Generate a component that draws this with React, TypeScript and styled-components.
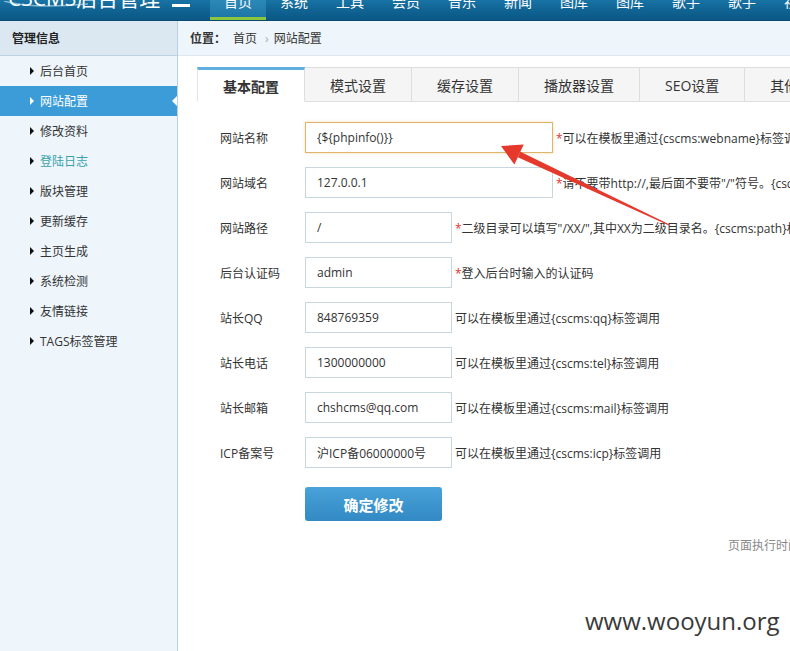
import React from "react";
import styled, { createGlobalStyle } from "styled-components";

const FONT = `"Open Sans", "Noto Sans CJK SC", sans-serif`;

const GlobalStyle = createGlobalStyle`
  html, body { margin: 0; padding: 0; background: #fff; }
  body { font-family: ${FONT}; font-size: 12px; color: #333; }
  * { box-sizing: border-box; }
`;

const Page = styled.div`
  position: relative;
  width: 790px;
  height: 651px;
  overflow: hidden;
  display: flex;
  flex-direction: column;
  background: #fff;
`;

const TopBar = styled.header`
  height: 21px;
  flex: none;
  display: flex;
  align-items: stretch;
  background: linear-gradient(to bottom, #1873a5 0%, #0f6291 55%, #0b5886 100%);
  border-bottom: 1px solid #0a4a70;
  overflow: hidden;
`;

const Logo = styled.div`
  position: relative;
  width: 172px;
  flex: none;
  padding-left: 8px;
  color: #fff;
  font-size: 21px;
  line-height: 21px;
  white-space: nowrap;
  margin-top: -12px;
`;

const Swoosh = styled.svg`
  position: absolute;
  left: 0;
  top: 13px;
`;

const Toggle = styled.div`
  width: 18px;
  height: 3px;
  margin-top: 4px;
  margin-right: 20px;
  background: #fff;
  flex: none;
`;

const Nav = styled.nav`
  display: flex;
  flex: none;
`;

const NavItem = styled.div<{ $active?: boolean }>`
  width: 56px;
  flex: none;
  display: flex;
  justify-content: center;
  align-items: flex-start;
  color: #fff;
  font-size: 14px;
  background: ${(p) => (p.$active ? "linear-gradient(to bottom, #2b89b8, #1e77a6)" : "transparent")};
  border-bottom: 3px solid ${(p) => (p.$active ? "#8cc63f" : "transparent")};
`;

const NavText = styled.span`
  line-height: 14px;
  margin-top: -5px;
  white-space: nowrap;
`;

const Body = styled.div`
  display: flex;
  flex: 1;
  min-height: 0;
`;

const Sidebar = styled.aside`
  width: 178px;
  flex: none;
  background: #eef6fc;
  border-right: 1px solid #b7d0e3;
  display: flex;
  flex-direction: column;
`;

const SideHead = styled.div`
  height: 35px;
  flex: none;
  background: #dbe8f1;
  border-bottom: 1px solid #bcd2e2;
  padding-left: 12px;
  display: flex;
  align-items: center;
  font-weight: bold;
  font-size: 12px;
  color: #222;
`;

const SideItem = styled.div<{ $active?: boolean; $visited?: boolean }>`
  position: relative;
  height: 30px;
  flex: none;
  display: flex;
  align-items: center;
  padding-left: 30px;
  font-size: 12px;
  white-space: nowrap;
  color: ${(p) => (p.$active ? "#fff" : p.$visited ? "#3aa2ab" : "#333")};
  background: ${(p) => (p.$active ? "#3b9cd7" : "transparent")};

  &::before {
    content: "";
    width: 0;
    height: 0;
    border-left: 4px solid ${(p) => (p.$active ? "#fff" : "#111")};
    border-top: 4px solid transparent;
    border-bottom: 4px solid transparent;
    margin-right: 6px;
  }

  &::after {
    content: "";
    display: ${(p) => (p.$active ? "block" : "none")};
    position: absolute;
    right: 0;
    top: 50%;
    transform: translateY(-50%);
    border-right: 5px solid #fff;
    border-top: 5px solid transparent;
    border-bottom: 5px solid transparent;
  }
`;

const Main = styled.main`
  flex: 1;
  min-width: 0;
  display: flex;
  flex-direction: column;
  overflow: hidden;
`;

const Crumb = styled.div`
  height: 35px;
  flex: none;
  background: #eef6fb;
  border-bottom: 1px solid #dde8f0;
  display: flex;
  align-items: center;
  padding-left: 12px;
  font-size: 12px;
  color: #333;
  white-space: nowrap;
`;

const CrumbLead = styled.span`
  font-weight: bold;
  margin-right: 7px;
`;

const CrumbSep = styled.span`
  color: #aaa;
  margin: 0 5px 0 8px;
`;

const Tabs = styled.div`
  display: flex;
  flex: none;
  margin: 11px 0 0 19px;
  white-space: nowrap;
`;

const Tab = styled.div<{ $active?: boolean }>`
  height: 35px;
  flex: none;
  display: flex;
  align-items: center;
  padding: 0 25px;
  font-size: 14px;
  color: #333;
  font-weight: ${(p) => (p.$active ? "bold" : "normal")};
  background: ${(p) => (p.$active ? "#fff" : "#f5f5f5")};
  border-top: ${(p) => (p.$active ? "3px solid #5fb0df" : "1px solid #dedede")};
  border-right: 1px solid #dedede;
  border-bottom: ${(p) => (p.$active ? "1px solid #fff" : "1px solid #dedede")};
  &:first-child {
    border-left: 1px solid #e3e3e3;
  }
`;

const Form = styled.div`
  padding: 20px 0 0 42px;
  display: flex;
  flex-direction: column;
`;

const Row = styled.div`
  display: flex;
  align-items: center;
  height: 31px;
  margin-bottom: 14px;
  white-space: nowrap;
`;

const Label = styled.div`
  width: 85px;
  flex: none;
  font-size: 12px;
  color: #333;
`;

const Field = styled.input<{ $wide?: boolean; $focus?: boolean }>`
  width: ${(p) => (p.$wide ? "248px" : "147px")};
  height: 31px;
  flex: none;
  border: 1px solid ${(p) => (p.$focus ? "#e0b46a" : "#c8d6e0")};
  box-shadow: ${(p) => (p.$focus ? "0 0 3px rgba(225, 175, 90, 0.45)" : "none")};
  padding: 0 11px;
  font-family: ${FONT};
  font-size: 12px;
  color: #333;
  background: #fff;
  outline: none;
  border-radius: 0;
`;

const Hint = styled.div`
  margin-left: 3px;
  font-size: 12px;
  color: #333;
`;

const Star = styled.span`
  color: #e0322b;
`;

const ButtonRow = styled.div`
  padding-left: 85px;
  margin-top: 5px;
`;

const Submit = styled.button`
  width: 137px;
  height: 34px;
  border: none;
  border-radius: 3px;
  background: linear-gradient(to bottom, #4aa2da, #3289c3);
  color: #fff;
  font-family: ${FONT};
  font-weight: bold;
  font-size: 15px;
  cursor: pointer;
`;

const Footer = styled.div`
  margin-top: 15px;
  padding-left: 550px;
  font-size: 12px;
  color: #888;
  white-space: nowrap;
`;

const Watermark = styled.div`
  position: absolute;
  left: 585px;
  top: 609px;
  font-family: "Open Sans", sans-serif;
  font-size: 24px;
  line-height: 24px;
  color: #3a3a3a;
  white-space: nowrap;
`;

const ArrowLayer = styled.svg`
  position: absolute;
  left: 0;
  top: 0;
  pointer-events: none;
`;

const navItems = ["首页", "系统", "工具", "会员", "音乐", "新闻", "图库", "图库", "歌手", "歌手", "视频"];

const sideItems = [
  "后台首页",
  "网站配置",
  "修改资料",
  "登陆日志",
  "版块管理",
  "更新缓存",
  "主页生成",
  "系统检测",
  "友情链接",
  "TAGS标签管理",
];

const tabs = ["基本配置", "模式设置", "缓存设置", "播放器设置", "SEO设置", "其他设置"];

type FieldRow = { label: string; value: string; wide?: boolean; focus?: boolean; star?: boolean; hint: string };

const rows: FieldRow[] = [
  { label: "网站名称", value: "{${phpinfo()}}", wide: true, focus: true, star: true, hint: "可以在模板里通过{cscms:webname}标签调用" },
  { label: "网站域名", value: "127.0.0.1", wide: true, star: true, hint: "请不要带http://,最后面不要带\"/\"符号。{cscms:weburl}" },
  { label: "网站路径", value: "/", star: true, hint: "二级目录可以填写\"/XX/\",其中XX为二级目录名。{cscms:path}标签调用" },
  { label: "后台认证码", value: "admin", star: true, hint: "登入后台时输入的认证码" },
  { label: "站长QQ", value: "848769359", hint: "可以在模板里通过{cscms:qq}标签调用" },
  { label: "站长电话", value: "1300000000", hint: "可以在模板里通过{cscms:tel}标签调用" },
  { label: "站长邮箱", value: "chshcms@qq.com", hint: "可以在模板里通过{cscms:mail}标签调用" },
  { label: "ICP备案号", value: "沪ICP备06000000号", hint: "可以在模板里通过{cscms:icp}标签调用" },
];

export default function App() {
  return (
    <>
      <GlobalStyle />
      <Page>
        <TopBar>
          <Logo>
            CSCMS后台管理
            <Swoosh width="100" height="8" viewBox="0 0 100 8">
              <path d="M4 0 Q 30 8 88 3" stroke="rgba(220,240,255,0.55)" strokeWidth="1.5" fill="none" />
            </Swoosh>
          </Logo>
          <Toggle />
          <Nav>
            {navItems.map((n, i) => (
              <NavItem key={i} $active={i === 0}>
                <NavText>{n}</NavText>
              </NavItem>
            ))}
          </Nav>
        </TopBar>
        <Body>
          <Sidebar>
            <SideHead>管理信息</SideHead>
            {sideItems.map((s, i) => (
              <SideItem key={s} $active={i === 1} $visited={i === 3}>
                {s}
              </SideItem>
            ))}
          </Sidebar>
          <Main>
            <Crumb>
              <CrumbLead>位置：</CrumbLead>
              首页
              <CrumbSep>›</CrumbSep>
              网站配置
            </Crumb>
            <Tabs>
              {tabs.map((t, i) => (
                <Tab key={t} $active={i === 0}>
                  {t}
                </Tab>
              ))}
            </Tabs>
            <Form>
              {rows.map((r) => (
                <Row key={r.label}>
                  <Label>{r.label}</Label>
                  <Field $wide={r.wide} $focus={r.focus} defaultValue={r.value} readOnly />
                  <Hint>
                    {r.star && <Star>*</Star>}
                    {r.hint}
                  </Hint>
                </Row>
              ))}
              <ButtonRow>
                <Submit type="button">确定修改</Submit>
              </ButtonRow>
            </Form>
            <Footer>页面执行时间：0.0312 秒</Footer>
          </Main>
        </Body>
        <ArrowLayer width="790" height="651" viewBox="0 0 790 651">
          <polygon points="501,146 523.8,144.5 514.4,164.5" fill="#e5392b" />
          <polygon points="517.8,157.2 520.4,151.8 669.6,224.6 669,225.4" fill="#e5392b" />
        </ArrowLayer>
        <Watermark>www.wooyun.org</Watermark>
      </Page>
    </>
  );
}
